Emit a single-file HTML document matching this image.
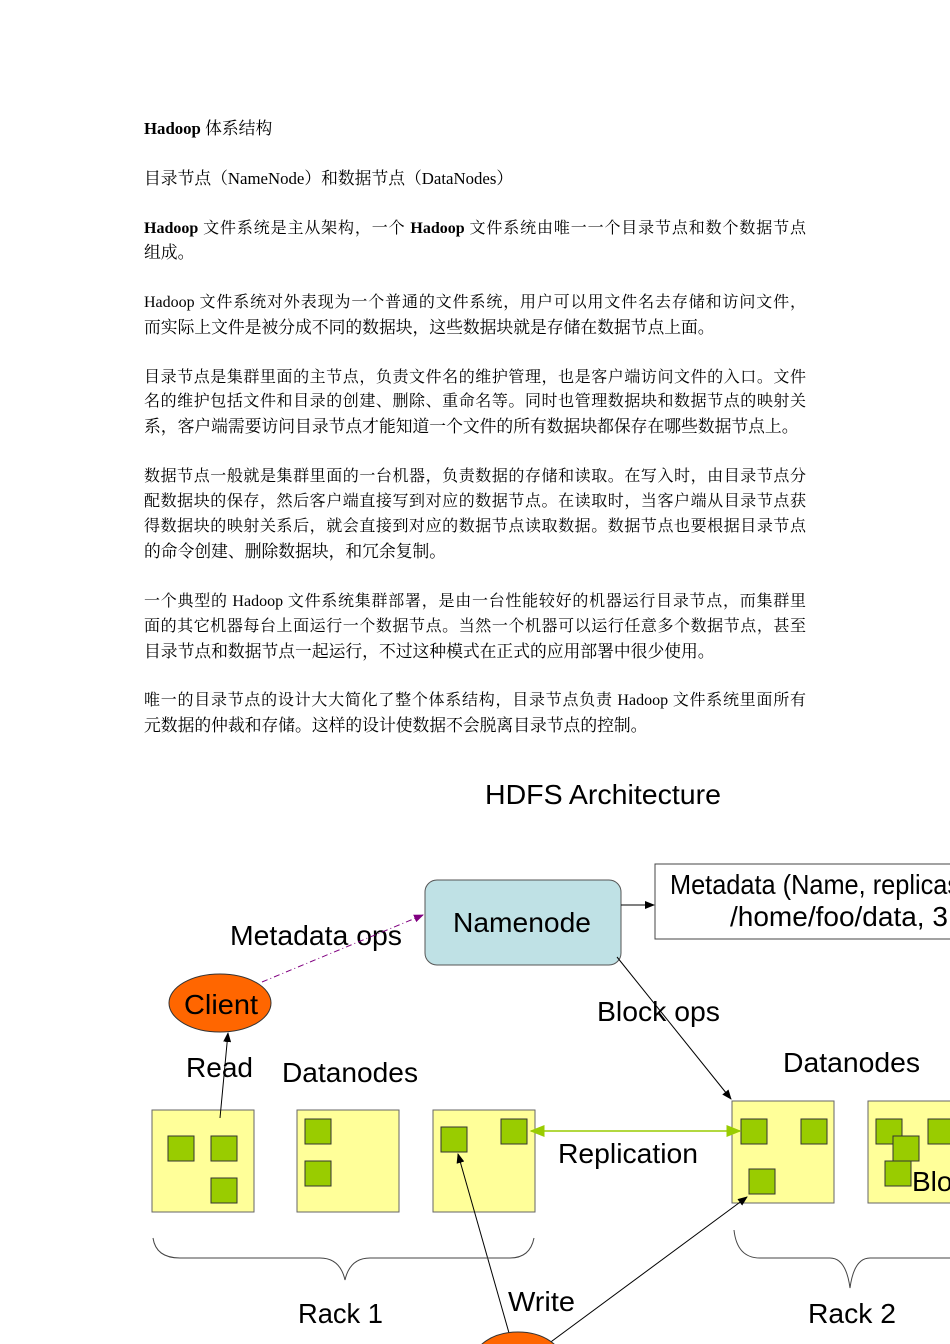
<!DOCTYPE html>
<html><head><meta charset="utf-8"><style>
html,body{margin:0;padding:0;background:#fff;}
body{width:950px;height:1344px;position:relative;overflow:hidden;font-family:"Liberation Serif","Noto Serif CJK SC","Noto Sans CJK SC",serif;font-size:16.8px;color:#000;}
.l{position:absolute;left:144px;line-height:18px;white-space:nowrap;}
.f{width:662px;text-align:justify;text-align-last:justify;font-size:16px;}
b{font-weight:bold;}
svg{position:absolute;left:0;top:0;}
svg text{font-family:"Liberation Sans",sans-serif;fill:#000;}
</style></head><body>
<div class="l" style="top:120px"><b>Hadoop</b> 体系结构</div>
<div class="l" style="top:170px">目录节点（NameNode）和数据节点（DataNodes）</div>
<div class="l f" style="top:220px"><b>Hadoop</b> 文件系统是主从架构，一个 <b>Hadoop</b> 文件系统由唯一一个目录节点和数个数据节点</div>
<div class="l" style="top:244px">组成。</div>
<div class="l f" style="top:294px">Hadoop 文件系统对外表现为一个普通的文件系统，用户可以用文件名去存储和访问文件，</div>
<div class="l" style="top:319px">而实际上文件是被分成不同的数据块，这些数据块就是存储在数据节点上面。</div>
<div class="l f" style="top:369px">目录节点是集群里面的主节点，负责文件名的维护管理，也是客户端访问文件的入口。文件</div>
<div class="l f" style="top:393px">名的维护包括文件和目录的创建、删除、重命名等。同时也管理数据块和数据节点的映射关</div>
<div class="l" style="top:418px">系，客户端需要访问目录节点才能知道一个文件的所有数据块都保存在哪些数据节点上。</div>
<div class="l f" style="top:468px">数据节点一般就是集群里面的一台机器，负责数据的存储和读取。在写入时，由目录节点分</div>
<div class="l f" style="top:493px">配数据块的保存，然后客户端直接写到对应的数据节点。在读取时，当客户端从目录节点获</div>
<div class="l f" style="top:518px">得数据块的映射关系后，就会直接到对应的数据节点读取数据。数据节点也要根据目录节点</div>
<div class="l" style="top:543px">的命令创建、删除数据块，和冗余复制。</div>
<div class="l f" style="top:593px">一个典型的 Hadoop 文件系统集群部署，是由一台性能较好的机器运行目录节点，而集群里</div>
<div class="l f" style="top:618px">面的其它机器每台上面运行一个数据节点。当然一个机器可以运行任意多个数据节点，甚至</div>
<div class="l" style="top:643px">目录节点和数据节点一起运行，不过这种模式在正式的应用部署中很少使用。</div>
<div class="l f" style="top:692px">唯一的目录节点的设计大大简化了整个体系结构，目录节点负责 Hadoop 文件系统里面所有</div>
<div class="l" style="top:717px">元数据的仲裁和存储。这样的设计使数据不会脱离目录节点的控制。</div>

<svg width="950" height="1344" viewBox="0 0 950 1344">
<defs>
<marker id="a" markerWidth="10" markerHeight="8" refX="9" refY="4" orient="auto"><path d="M0,0 L10,4 L0,8 z" fill="#000"/></marker>
<marker id="p" markerWidth="10" markerHeight="8" refX="9" refY="4" orient="auto"><path d="M0,0 L10,4 L0,8 z" fill="#800080"/></marker>
<marker id="g" markerWidth="10" markerHeight="8" refX="9" refY="4" orient="auto"><path d="M0,0 L10,4 L0,8 z" fill="#99cc00"/></marker>
<marker id="gs" markerWidth="10" markerHeight="8" refX="1" refY="4" orient="auto"><path d="M10,0 L0,4 L10,8 z" fill="#99cc00"/></marker>
</defs>
<text x="485" y="804" font-size="28" textLength="236" lengthAdjust="spacingAndGlyphs">HDFS Architecture</text>
<rect x="425" y="880" width="196" height="85" rx="12" fill="#bfe1e5" stroke="#555" stroke-width="1"/>
<text x="453" y="932" font-size="28" textLength="138" lengthAdjust="spacingAndGlyphs">Namenode</text>
<rect x="655" y="864" width="310" height="75" fill="#fff" stroke="#444" stroke-width="1"/>
<text x="670" y="894" font-size="28" textLength="290" lengthAdjust="spacingAndGlyphs">Metadata (Name, replicas</text>
<text x="730" y="926" font-size="28">/home/foo/data, 3</text>
<line x1="621" y1="905" x2="654" y2="905" stroke="#000" marker-end="url(#a)"/>
<text x="230" y="945" font-size="28" textLength="172" lengthAdjust="spacingAndGlyphs">Metadata ops</text>
<line x1="262" y1="982" x2="423" y2="915" stroke="#800080" stroke-dasharray="6,3,1,3" marker-end="url(#p)"/>
<ellipse cx="220" cy="1003" rx="51" ry="29" fill="#ff6600" stroke="#333"/>
<text x="184" y="1014" font-size="28" textLength="74" lengthAdjust="spacingAndGlyphs">Client</text>
<text x="186" y="1077" font-size="28" textLength="67" lengthAdjust="spacingAndGlyphs">Read</text>
<text x="282" y="1082" font-size="28" textLength="136" lengthAdjust="spacingAndGlyphs">Datanodes</text>
<text x="783" y="1072" font-size="28" textLength="137" lengthAdjust="spacingAndGlyphs">Datanodes</text>
<text x="597" y="1021" font-size="28" textLength="123" lengthAdjust="spacingAndGlyphs">Block ops</text>
<g fill="#ffff99" stroke="#666">
<rect x="152" y="1110" width="102" height="102"/>
<rect x="297" y="1110" width="102" height="102"/>
<rect x="433" y="1110" width="102" height="102"/>
<rect x="732" y="1101" width="102" height="102"/>
<rect x="868" y="1101" width="102" height="102"/>
</g>
<g fill="#99cc00" stroke="#333">
<rect x="168" y="1136" width="26" height="25"/>
<rect x="211" y="1136" width="26" height="25"/>
<rect x="211" y="1178" width="26" height="25"/>
<rect x="305" y="1119" width="26" height="25"/>
<rect x="305" y="1161" width="26" height="25"/>
<rect x="441" y="1127" width="26" height="25"/>
<rect x="501" y="1119" width="26" height="25"/>
<rect x="741" y="1119" width="26" height="25"/>
<rect x="801" y="1119" width="26" height="25"/>
<rect x="749" y="1169" width="26" height="25"/>
<rect x="876" y="1119" width="26" height="25"/>
<rect x="928" y="1119" width="26" height="25"/>
<rect x="893" y="1136" width="26" height="25"/>
<rect x="885" y="1161" width="26" height="25"/>
</g>
<text x="912" y="1191" font-size="28">Blocks</text>
<line x1="531" y1="1131" x2="740" y2="1131" stroke="#99cc00" stroke-width="1.5" marker-start="url(#gs)" marker-end="url(#g)"/>
<text x="558" y="1163" font-size="28" textLength="140" lengthAdjust="spacingAndGlyphs">Replication</text>
<line x1="617" y1="957" x2="731" y2="1099" stroke="#000" marker-end="url(#a)"/>
<line x1="220" y1="1118" x2="228" y2="1033" stroke="#000" marker-end="url(#a)"/>
<line x1="511" y1="1340" x2="458" y2="1154" stroke="#000" marker-end="url(#a)"/>
<line x1="548" y1="1344" x2="747" y2="1197" stroke="#000" marker-end="url(#a)"/>
<path d="M153,1238 Q156,1258 180,1258 L320,1258 Q340,1258 345,1280 Q350,1258 370,1258 L510,1258 Q530,1258 534,1238" fill="none" stroke="#444"/>
<path d="M734,1230 Q737,1258 760,1258 L830,1258 Q846,1258 850,1288 Q854,1258 870,1258 L960,1258" fill="none" stroke="#444"/>
<text x="298" y="1323" font-size="28" textLength="85" lengthAdjust="spacingAndGlyphs">Rack 1</text>
<text x="508" y="1311" font-size="28" textLength="67" lengthAdjust="spacingAndGlyphs">Write</text>
<text x="808" y="1323" font-size="28" textLength="88" lengthAdjust="spacingAndGlyphs">Rack 2</text>
<ellipse cx="518" cy="1362" rx="45" ry="30" fill="#ff6600" stroke="#333"/>
</svg>
</body></html>
